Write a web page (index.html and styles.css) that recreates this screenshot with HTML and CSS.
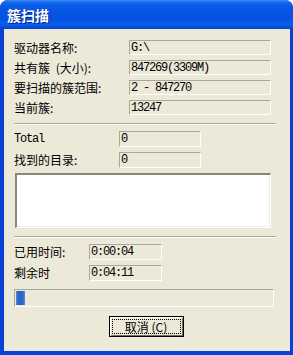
FILE: index.html
```html
<!DOCTYPE html>
<html lang="zh">
<head>
<meta charset="utf-8">
<title>簇扫描</title>
<link rel="stylesheet" href="styles.css">
</head>
<body>
<div class="window">
  <div class="titlebar"><span class="title">簇扫描</span></div>
  <div class="client">
    <div class="group g1">
      <div class="row"><span class="label">驱动器名称:</span><span class="field mono">G:\</span></div>
      <div class="row"><span class="label">共有簇 <span class="paren">(</span>大小):</span><span class="field mono">847269(3309M)</span></div>
      <div class="row"><span class="label">要扫描的簇范围:</span><span class="field mono">2 - 847270</span></div>
      <div class="row"><span class="label">当前簇:</span><span class="field mono">13247</span></div>
    </div>
    <div class="sep"></div>
    <div class="group g2">
      <div class="row"><span class="label mono">Total</span><span class="field mono">0</span></div>
      <div class="row"><span class="label">找到的目录:</span><span class="field mono">0</span></div>
      <div class="listbox"></div>
    </div>
    <div class="sep"></div>
    <div class="group g3">
      <div class="row"><span class="label">已用时间:</span><span class="field mono">0:00:04</span></div>
      <div class="row"><span class="label">剩余时</span><span class="field mono">0:04:11</span></div>
    </div>
    <div class="progress"><div class="chunk"></div></div>
    <div class="buttons">
      <button class="btn"><span class="focus">取消 (C)</span></button>
    </div>
  </div>
</div>
</body>
</html>
```

FILE: styles.css
```css
html, body {
  margin: 0;
  padding: 0;
  background: #ffffff;
}

.window {
  width: 293px;
  height: 355px;
  box-sizing: border-box;
  display: flex;
  flex-direction: column;
  border-radius: 8px 8px 0 0;
  overflow: hidden;
  background: #0842d6;
  font-family: "Noto Sans CJK SC", "Noto Sans", sans-serif;
  font-size: 12px;
  color: #000;
}

.titlebar {
  height: 29px;
  flex: none;
  display: flex;
  align-items: center;
  padding-left: 7px;
  background: linear-gradient(to bottom,
    #3b8cf6 0px, #1a6ef0 2px, #0a5be6 5px, #0554e3 12px,
    #0553e4 20px, #0a5ded 24px, #0650dc 27px, #0640c8 29px);
}

.title {
  color: #ffffff;
  font-weight: bold;
  font-size: 14px;
  text-shadow: 1px 1px 0 #0a1e8c;
  margin-top: 1px;
}

.client {
  flex: 1;
  margin: 0 3px 4px 3px;
  background: #ece9d8;
  display: flex;
  flex-direction: column;
  padding: 11px 14px 0 11px;
  box-shadow: inset 1px 0 0 #0a3fc4;
}

.group {
  display: flex;
  flex-direction: column;
}

.g1 { gap: 5px; }
.g1 .row { height: 15px; }
.g1 .label { width: 115px; }
.g1 .field { width: 142px; }

.g2 { gap: 5px; margin-top: 6px; }
.g2 .row { height: 16px; }
.g2 .label { width: 105px; }
.g2 .field { width: 82px; }

.g3 { gap: 5px; margin-top: 6px; }
.g3 .row { height: 16px; }
.g3 .label { width: 75px; }
.g3 .field { width: 73px; }

.row {
  display: flex;
  align-items: stretch;
}

.label {
  flex: none;
  display: flex;
  align-items: center;
  white-space: pre;
  line-height: 1;
}

.paren {
  margin-left: 3px;
}

.field {
  flex: none;
  box-sizing: border-box;
  border-top: 1px solid #aca899;
  border-left: 1px solid #aca899;
  border-right: 1px solid #ffffff;
  border-bottom: 1px solid #ffffff;
  padding-left: 1px;
  display: flex;
  align-items: center;
  white-space: nowrap;
}

.mono {
  font-family: "Liberation Mono", "DejaVu Sans Mono", monospace;
  font-size: 12px;
  letter-spacing: -1.2px;
}

.sep {
  height: 0;
  width: 262px;
  margin-top: 8px;
  border-top: 1px solid #aca899;
  border-bottom: 1px solid #ffffff;
}

.listbox {
  margin-left: 1px;
  width: 256px;
  height: 55px;
  box-sizing: border-box;
  background: #ffffff;
  border-top: 2px solid #8a8779;
  border-left: 2px solid #8a8779;
  border-right: 1px solid #ffffff;
  border-bottom: 1px solid #ffffff;
  box-shadow: inset -1px -1px 0 #f1efe2;
}

.progress {
  margin-top: 8px;
  width: 260px;
  height: 18px;
  box-sizing: border-box;
  border-top: 1px solid #aca899;
  border-left: 1px solid #aca899;
  border-right: 1px solid #ffffff;
  border-bottom: 1px solid #ffffff;
  padding: 1px 0 1px 1px;
  display: flex;
}

.chunk {
  width: 9px;
  background: linear-gradient(to right, #5a8ce0 0px, #2f65c8 2px, #2f65c8 7px, #5a8ce0 9px);
}

.buttons {
  display: flex;
  justify-content: center;
  margin-top: 9px;
  padding-left: 2px;
}

.btn {
  width: 75px;
  height: 21px;
  box-sizing: border-box;
  margin: 0;
  padding: 2px;
  border: 1px solid #000000;
  background: #ece9d8;
  box-shadow: inset 1px 1px 0 #ffffff, inset -1px -1px 0 #716f64;
  font-family: "Noto Sans CJK SC", "Noto Sans", sans-serif;
  font-size: 12px;
  color: #000;
  display: flex;
}

.focus {
  flex: 1;
  border: 1px dotted #000000;
  display: flex;
  align-items: center;
  justify-content: center;
  line-height: 1;
  white-space: pre;
}
```
